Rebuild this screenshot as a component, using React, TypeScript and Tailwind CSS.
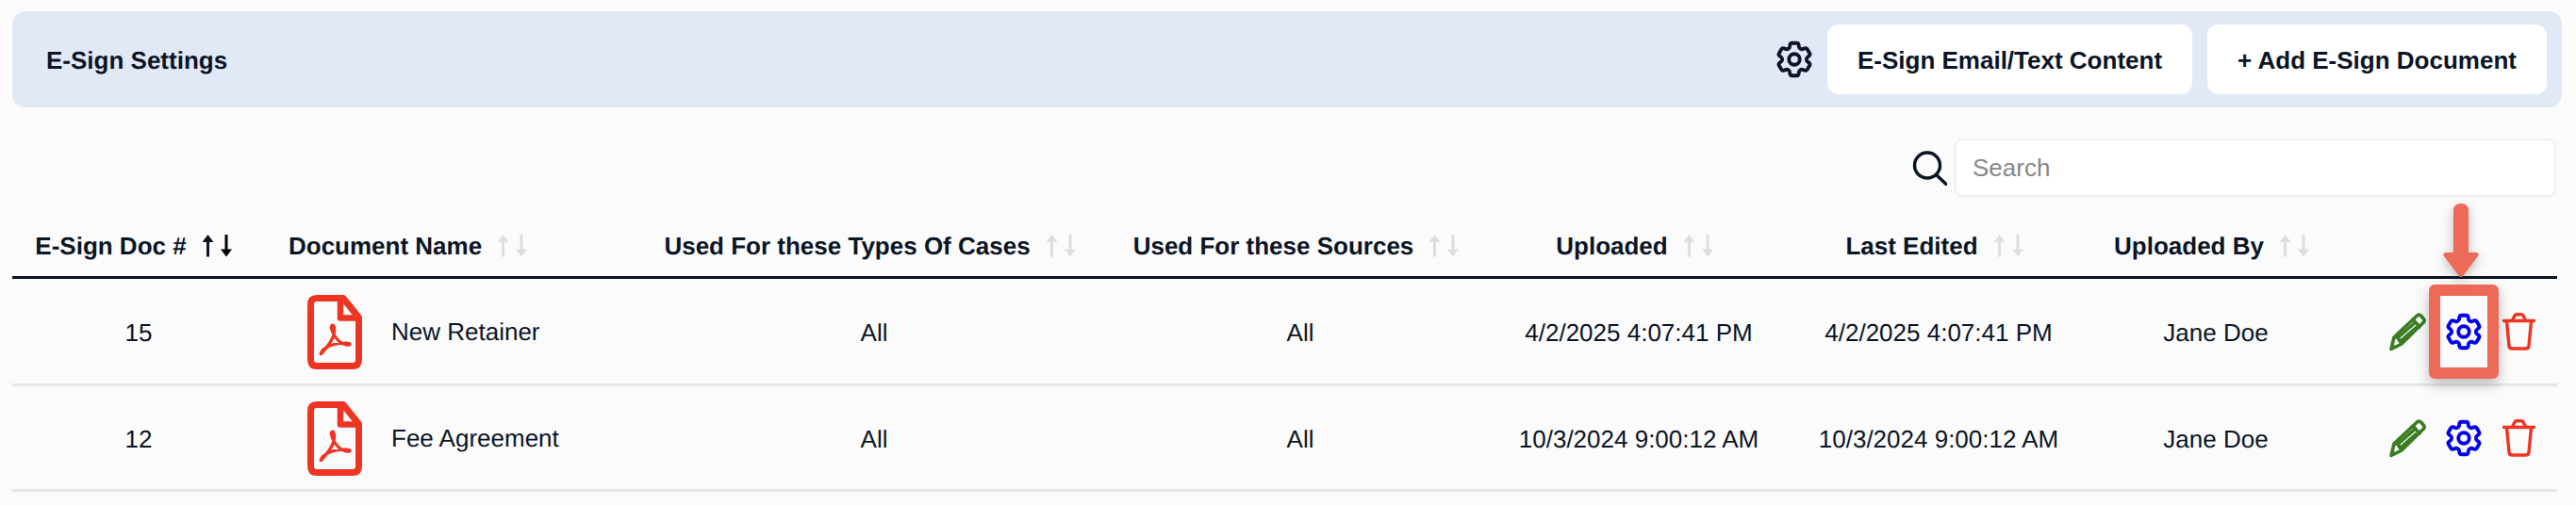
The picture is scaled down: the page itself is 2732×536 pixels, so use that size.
import React from "react";
import { HiOutlineCog6Tooth } from "react-icons/hi2";

const SortArrows = ({ active }: { active?: boolean }) => {
  const up = active ? "#0b1526" : "#dedede";
  const down = active ? "#000000" : "#dedede";
  return (
    <svg width="32" height="24" viewBox="0 0 32 24" className="shrink-0">
      <path d="M5.5 0 L11.5 8 H7 V23.5 H4 V8 H-0.5 Z" fill={up} />
      <path d="M25 23.5 L19 15.5 H23.5 V0 H26.5 V15.5 H31 Z" fill={down} />
    </svg>
  );
};

const PdfIcon = () => (
  <svg width="58" height="79" viewBox="0 0 58 79" className="shrink-0">
    <path
      d="M10 3.5 H38 L54.5 24 V69 Q54.5 75.5 48 75.5 H10 Q3.5 75.5 3.5 69 V10 Q3.5 3.5 10 3.5 Z"
      fill="none"
      stroke="#ee3524"
      strokeWidth="7"
      strokeLinejoin="round"
    />
    <path d="M35 4 V24.5 H54" fill="none" stroke="#ee3524" strokeWidth="6.5" strokeLinejoin="round" />
    <path
      d="M25.5 33 C28 30 29.5 36 28 42 C26 50 20 56 16 61 C13 65 14 61 17 58 C23 53 33 51 41 51 C47 51 46 54 41 53 C35 52 30 46 28 42 C26 38 24.5 35 25.5 33 Z"
      fill="none"
      stroke="#ee3524"
      strokeWidth="3.2"
      strokeLinejoin="round"
    />
  </svg>
);

const Pencil = () => (
  <svg width="40" height="41" viewBox="0 0 40 41" className="shrink-0">
    <g fill="none" stroke="#3a7d22" strokeWidth="3.6" strokeLinejoin="round" strokeLinecap="round">
      <path d="M31 2.5 Q33 1.5 35 3.5 L37.5 6.5 Q39 8.5 37 10.5 L14 33 L3 38.5 L6 26 Z" />
      <path d="M26 7 L33 15" />
      <path d="M6.5 26 L10 26 L12 30 L14.5 32" />
      <path d="M10.5 26 L26.5 12" />
      <path d="M13 30 L29 16" />
    </g>
    <path d="M2 39.5 L4 32 L9 37 Z" fill="#3a7d22" />
  </svg>
);

const Trash = () => (
  <svg width="35" height="40" viewBox="0 0 35 40" className="shrink-0">
    <g fill="none" stroke="#ee3524" strokeWidth="3.4" strokeLinecap="round" strokeLinejoin="round">
      <path d="M1.5 8.5 H33.5" />
      <path d="M4.5 9 L7 35 Q7.3 38 10.5 38 H24.5 Q27.7 38 28 35 L30.5 9" />
      <path d="M10.5 8 L13 3 Q13.6 1.8 15 1.8 H20 Q21.4 1.8 22 3 L24.5 8" />
    </g>
  </svg>
);

const SearchIcon = () => (
  <svg width="37" height="37" viewBox="0 0 37 37" className="shrink-0">
    <circle cx="16" cy="15.5" r="13.5" fill="none" stroke="#0b1526" strokeWidth="3.4" />
    <path d="M25.5 25.5 L36 35.5" stroke="#0b1526" strokeWidth="3.4" strokeLinecap="round" />
  </svg>
);

const Actions = () => (
  <div className="flex items-center pl-[45px]">
    <Pencil />
    <HiOutlineCog6Tooth className="text-[#0000f0] shrink-0 ml-[17px] mr-[18px]" size={46} strokeWidth={2} />
    <Trash />
  </div>
);

const rows = [
  { id: "15", name: "New Retainer", date: "4/2/2025 4:07:41 PM" },
  { id: "12", name: "Fee Agreement", date: "10/3/2024 9:00:12 AM" },
];

const Head = ({ label, active }: { label: string; active?: boolean }) => (
  <div className={active ? "flex items-center justify-center gap-[17px] pr-[10px]" : "flex items-center justify-center gap-[17px] pr-[8px]"}>
    <span>{label}</span>
    <SortArrows active={active} />
  </div>
);

export default function App() {
  return (
    <div
      className="relative w-[2732px] h-[536px] overflow-hidden bg-[#fbfbfb] text-[#0b1526] text-[26px] leading-[32px] pt-[12px] [text-rendering:geometricPrecision]"
      style={{ fontFamily: '"Liberation Sans", Arial, sans-serif' }}
    >
      <div className="ml-[13px] w-[2704px] h-[102px] rounded-[14px] bg-[#e2e9f6] flex items-center pl-[36px] pr-[16px]">
        <div className="font-bold pt-[2px]">E-Sign Settings</div>
        <div className="ml-auto flex items-center">
          <HiOutlineCog6Tooth className="shrink-0 mr-[12px]" size={46} strokeWidth={2} />
          <button className="h-[74px] w-[387px] pt-[2px] rounded-[12px] bg-white font-bold">E-Sign Email/Text Content</button>
          <button className="h-[74px] w-[360px] pt-[2px] ml-[16px] rounded-[12px] bg-white font-bold">+ Add E-Sign Document</button>
        </div>
      </div>

      <div className="mt-[33px] w-[2711px] flex justify-end items-center gap-[8px]">
        <SearchIcon />
        <input
          placeholder="Search"
          className="w-[638px] h-[62px] bg-white border-2 border-[#f1f1f1] rounded-[8px] pl-[17px] outline-none placeholder:text-[#888888]"
        />
      </div>

      <table className="ml-[13px] mt-[20px] w-[2699px] table-fixed border-collapse">
        <thead>
          <tr className="h-[65px] border-b-[3px] border-[#0b1526] font-bold">
            <th className="w-[268px] font-bold"><Head label="E-Sign Doc #" active /></th>
            <th className="w-[391px] font-bold pl-[25px]">
              <div className="flex items-center gap-[17px]">
                <span>Document Name</span>
                <SortArrows />
              </div>
            </th>
            <th className="w-[510px] font-bold"><Head label="Used For these Types Of Cases" /></th>
            <th className="w-[394px] font-bold"><Head label="Used For these Sources" /></th>
            <th className="w-[324px] font-bold"><Head label="Uploaded" /></th>
            <th className="w-[312px] font-bold"><Head label="Last Edited" /></th>
            <th className="w-[276px] font-bold"><Head label="Uploaded By" /></th>
            <th className="w-[224px]" />
          </tr>
          <tr className="h-[2px] bg-[#e6e6e6]">
            <th colSpan={8} className="p-0 h-[2px] leading-[0px] text-[0px]" />
          </tr>
        </thead>
        <tbody>
          {rows.map((r) => (
            <tr key={r.id} className="h-[112px] border-b-[3px] border-[#e6e6e6] text-center">
              <td className="pt-[3px]">{r.id}</td>
              <td className="pt-[2px]">
                <div className="flex items-center pl-[45px] gap-[31px] text-left">
                  <PdfIcon />
                  <span>{r.name}</span>
                </div>
              </td>
              <td className="pt-[3px]">All</td>
              <td className="pt-[3px]">All</td>
              <td className="pt-[3px]">{r.date}</td>
              <td className="pt-[3px]">{r.date}</td>
              <td className="pt-[3px]">Jane Doe</td>
              <td className="pt-[2px]"><Actions /></td>
            </tr>
          ))}
        </tbody>
      </table>

      {/* Annotation overlay */}
      <div className="absolute left-[2576px] top-[302px] w-[74px] h-[100px] border-[12px] border-[#ec6a57] rounded-[6px] shadow-[0_6px_14px_rgba(0,0,0,0.25)]" />
      <svg className="absolute left-[2588px] top-[212px]" width="44" height="86" viewBox="0 0 44 86" style={{ filter: "drop-shadow(0 4px 6px rgba(0,0,0,0.25))" }}>
        <path
          d="M14 12 Q14 4 22 4 Q30 4 30 12 V56 H38 Q42 56 40 60 L24 81 Q22 83 20 81 L4 60 Q2 56 6 56 H14 Z"
          fill="#ec6a57"
        />
      </svg>
    </div>
  );
}
